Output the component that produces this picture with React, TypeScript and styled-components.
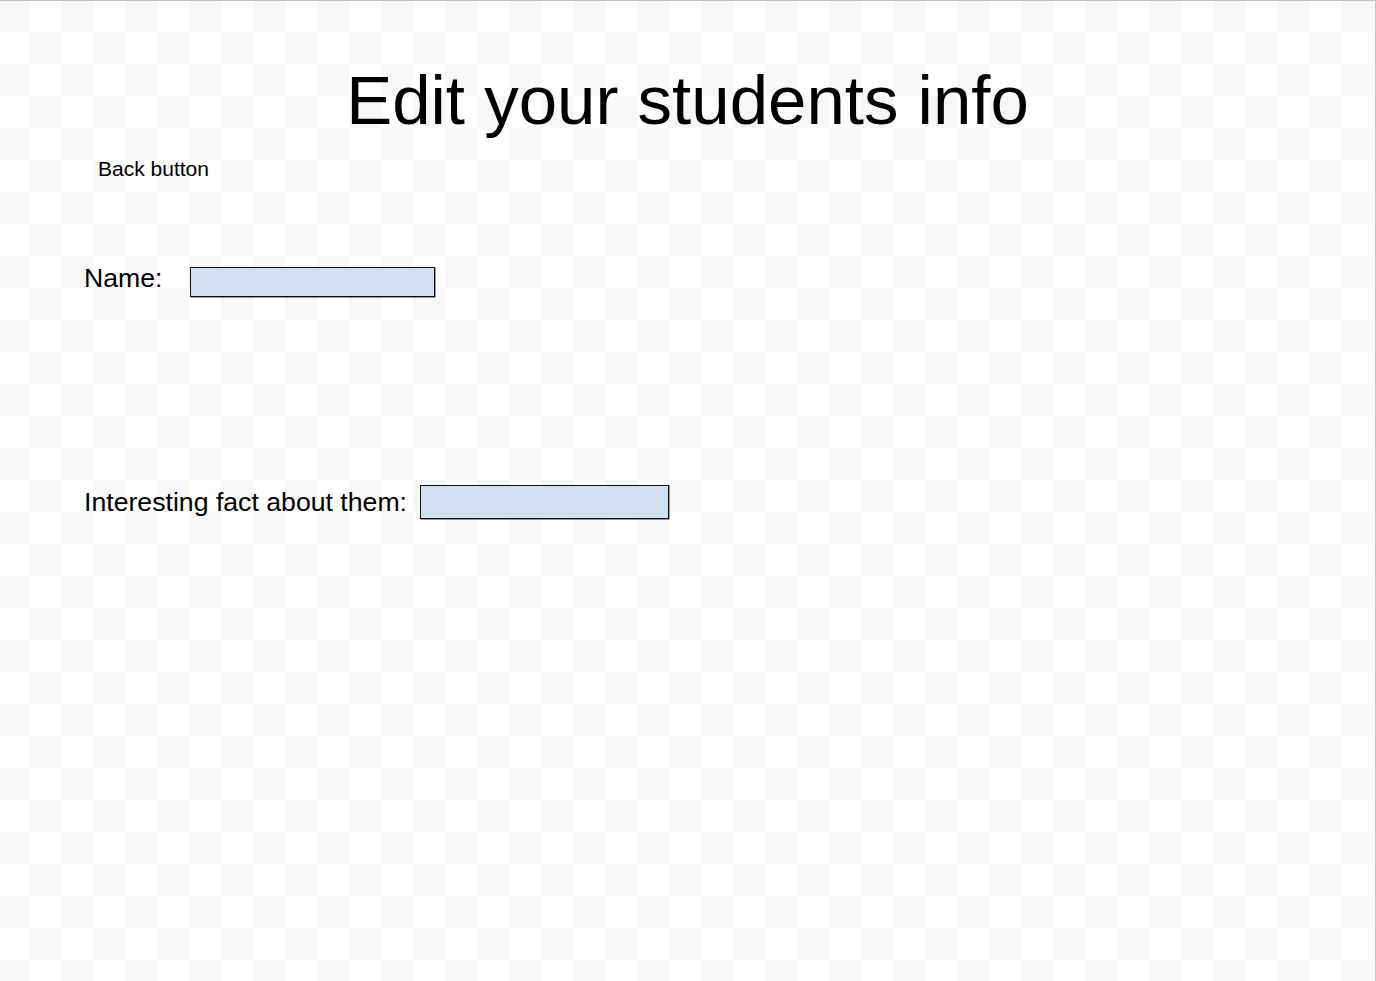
import React from "react";
import styled, { createGlobalStyle } from "styled-components";

const GlobalStyle = createGlobalStyle`
  html, body {
    margin: 0;
    padding: 0;
    background: #ffffff;
  }
  body {
    font-family: "Liberation Sans", Arial, sans-serif;
    color: #000000;
  }
  * {
    box-sizing: border-box;
  }
`;

const Page = styled.div`
  width: 1376px;
  height: 981px;
  overflow: hidden;
  border-top: 1px solid #c4c4c4;
  border-right: 1px solid #c4c4c4;
  background-color: #ffffff;
  background-image: conic-gradient(
    #ffffff 25%,
    #f7f7f7 0 50%,
    #ffffff 0 75%,
    #f7f7f7 0
  );
  background-size: 64px 64px;
  background-position: -3px -1px;
  padding: 60px 0 0 84px;
  display: flex;
  flex-direction: column;
  align-items: flex-start;
`;

const Title = styled.h1`
  align-self: stretch;
  margin: 0 0 0 -84px;
  font-size: 69px;
  line-height: 80px;
  font-weight: 400;
  text-align: center;
`;

const BackLink = styled.button`
  margin: 15px 0 0 14px;
  padding: 0;
  border: none;
  background: transparent;
  font-family: inherit;
  font-size: 21px;
  line-height: 25px;
  color: #000000;
  cursor: pointer;
`;

const Row = styled.div<{ $top: number; $gap: number; $align: string }>`
  display: flex;
  align-items: ${(p) => p.$align};
  gap: ${(p) => p.$gap}px;
  margin-top: ${(p) => p.$top}px;
`;

const Label = styled.label`
  font-size: 26.67px;
  line-height: 30px;
  white-space: nowrap;
`;

const Field = styled.input<{ $w: number; $h: number; $offset: number }>`
  width: ${(p) => p.$w}px;
  height: ${(p) => p.$h}px;
  margin: ${(p) => p.$offset}px 0 0 0;
  padding: 0 6px;
  border: 1px solid #111111;
  border-radius: 0;
  background: #d3e0f1;
  box-shadow: 0.5px 0.5px 0 0 #333333;
  font-family: inherit;
  font-size: 16px;
  outline: none;
`;

export default function App() {
  return (
    <>
      <GlobalStyle />
      <Page>
        <Title>Edit your students info</Title>
        <BackLink type="button">Back button</BackLink>
        <Row $top={82} $gap={27} $align="flex-start">
          <Label htmlFor="student-name">Name:</Label>
          <Field id="student-name" type="text" $w={245} $h={30} $offset={4} />
        </Row>
        <Row $top={188} $gap={13} $align="center">
          <Label htmlFor="student-fact">Interesting fact about them:</Label>
          <Field id="student-fact" type="text" $w={249} $h={34} $offset={0} />
        </Row>
      </Page>
    </>
  );
}
